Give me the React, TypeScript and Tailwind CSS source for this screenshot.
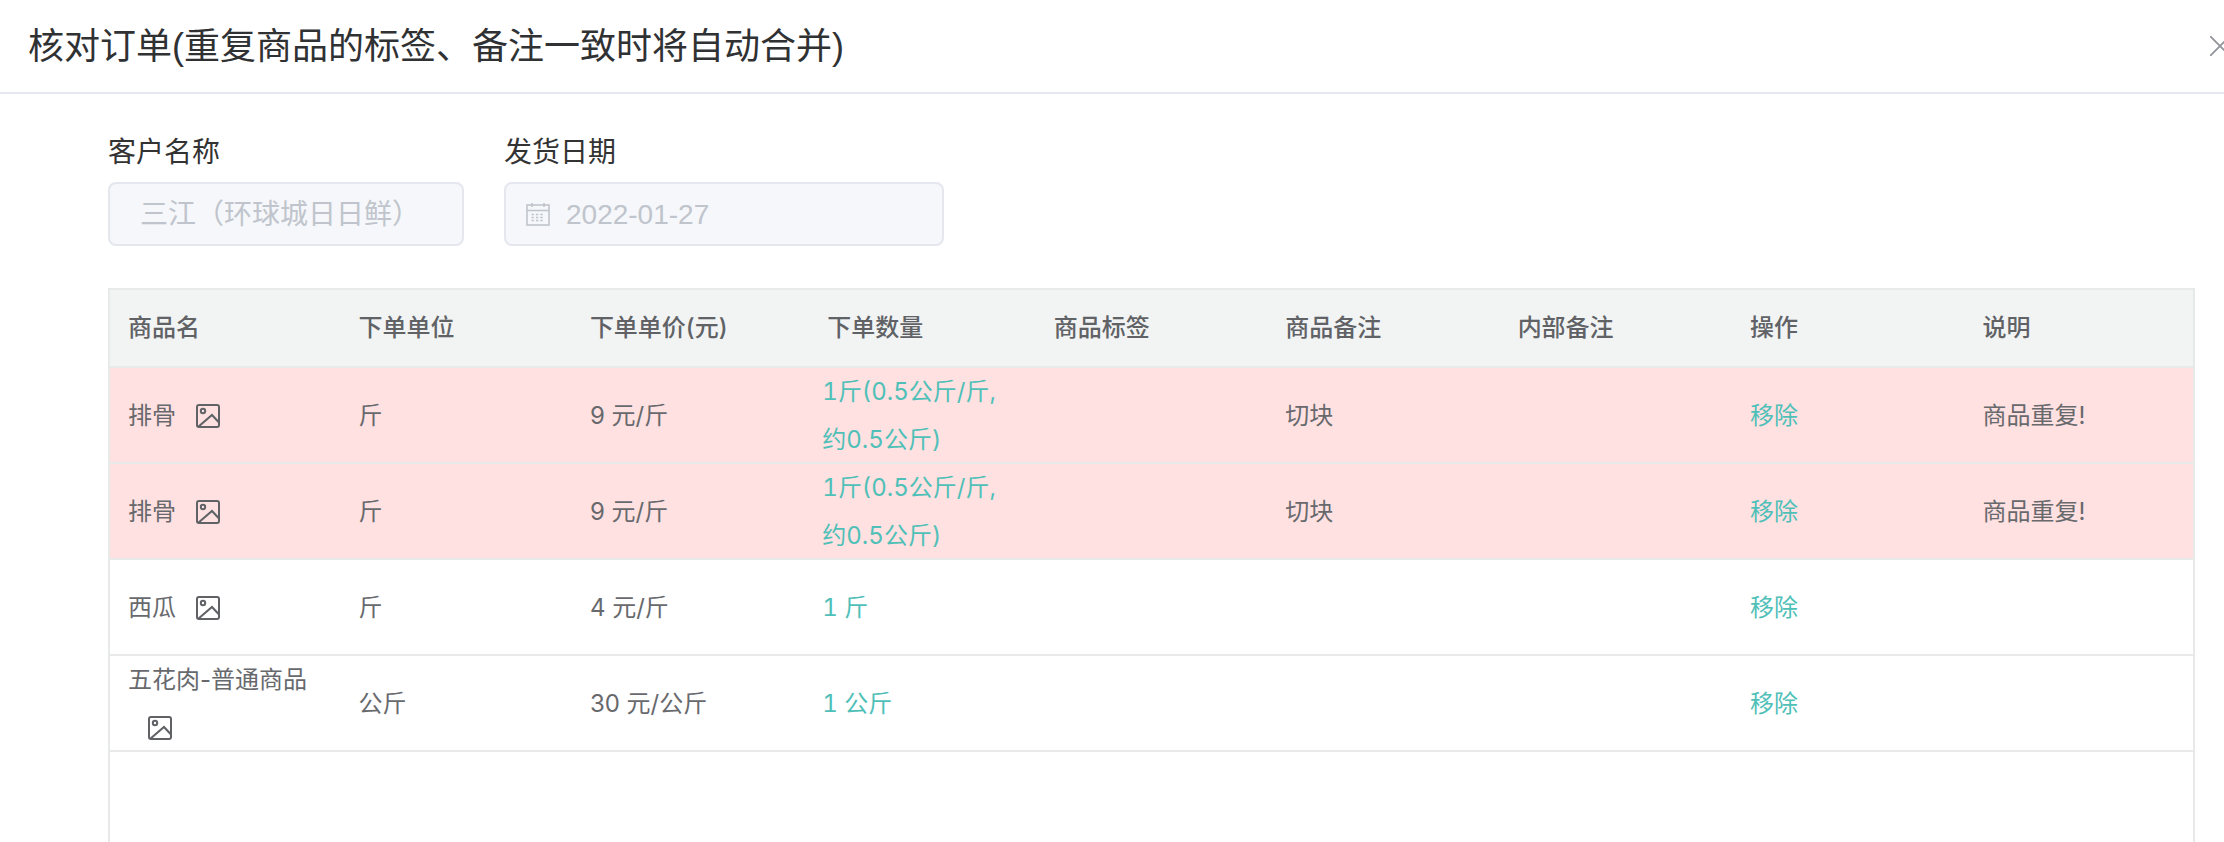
import React from "react";

const cjk = '"Liberation Sans","Noto Sans CJK SC",sans-serif';

function ImageIcon({ className = "" }: { className?: string }) {
  return (
    <svg viewBox="0 0 24 24" fill="none" stroke="#606266" strokeWidth="2" className={"inline-block w-6 h-6 align-[-4px] " + className}>
      <rect x="1" y="1" width="22" height="22" rx="2" />
      <circle cx="7" cy="7" r="2.2" />
      <path d="M2 23 L16 11 L23 18.5" />
    </svg>
  );
}

function CalendarIcon() {
  return (
    <svg viewBox="0 0 24 24" fill="none" stroke="#c0c4cc" strokeWidth="1.6" className="w-6 h-6 shrink-0">
      <rect x="1" y="3" width="22" height="20" />
      <path d="M1 8.5 H23 M6 1 V5 M18 1 V5" />
      <path d="M5.5 12.5 H18.5 M5.5 15.5 H18.5 M5.5 18.5 H18.5" strokeDasharray="2.4 2" />
    </svg>
  );
}

type Row = {
  name: string;
  unit: string;
  price: string;
  qty: React.ReactNode;
  note?: string;
  desc?: string;
  pink?: boolean;
};

const dupQty = (
  <>
    1斤(0.5公斤/斤,
    <br />
    约0.5公斤)
  </>
);

const rows: Row[] = [
  { name: "排骨", unit: "斤", price: "9 元/斤", qty: dupQty, note: "切块", desc: "商品重复!", pink: true },
  { name: "排骨", unit: "斤", price: "9 元/斤", qty: dupQty, note: "切块", desc: "商品重复!", pink: true },
  { name: "西瓜", unit: "斤", price: "4 元/斤", qty: "1 斤" },
  { name: "五花肉-普通商品", unit: "公斤", price: "30 元/公斤", qty: "1 公斤" },
];

const heads = ["商品名", "下单单位", "下单单价(元)", "下单数量", "商品标签", "商品备注", "内部备注", "操作", "说明"];
const headPads = ["pl-[18px]", "pl-[17px]", "pl-[17px]", "pl-[23px]", "pl-[18px]", "pl-[18px]", "pl-[19px]", "pl-[20px]", "pl-[21px]"];

export default function App() {
  return (
    <div className="h-[842px] w-[2224px] overflow-hidden bg-white flex flex-col" style={{ fontFamily: cjk }}>
      <div className="h-[94px] shrink-0 border-b-2 border-[#e4e7ed] flex items-center justify-between pl-[28px]">
        <h1 className="mt-[2px] text-[36px] leading-[48px] font-normal text-[#303133]">核对订单(重复商品的标签、备注一致时将自动合并)</h1>
        <svg viewBox="0 0 20 20" stroke="#909399" strokeWidth="1.8" className="w-5 h-5 shrink-0 -mr-[6px]">
          <path d="M0 0 L20 20 M20 0 L0 20" />
        </svg>
      </div>

      <div className="flex gap-10 pl-[108px] pt-[31px] shrink-0">
        <div className="w-[356px]">
          <div className="text-[28px] leading-[56px] text-[#333333]">客户名称</div>
          <div className="mt-[1px] h-[64px] rounded-lg border-2 border-[#e4e7ed] bg-[#f5f7fa] pl-[30px] pt-[2px] flex items-center text-[28px] text-[#c0c4cc]">
            三江（环球城日日鲜）
          </div>
        </div>
        <div className="w-[440px]">
          <div className="text-[28px] leading-[56px] text-[#333333]">发货日期</div>
          <div className="mt-[1px] h-[64px] rounded-lg border-2 border-[#e4e7ed] bg-[#f5f7fa] pl-[20px] flex items-center gap-[16px] text-[28px] text-[#c0c4cc]">
            <CalendarIcon />
            <span className="pt-[2px]">2022-01-27</span>
          </div>
        </div>
      </div>

      <div
        className="ml-[108px] mt-[42px] w-[2087px] flex-1 border-2 border-b-0 border-[#e8e9e9] text-[24px] text-[#67696d]"
        style={{ fontFamily: 'Inter,"Noto Sans CJK SC",sans-serif' }}
      >
        <table className="w-full table-fixed border-collapse">
          <thead>
            <tr className="h-[77px] bg-[#f2f4f4] border-b-2 border-[#e8e9e9]">
              {heads.map((h, i) => (
                <th key={h} className={"text-left font-medium text-[#606266] " + headPads[i]}>
                  {h}
                </th>
              ))}
            </tr>
          </thead>
          <tbody>
            {rows.map((r, i) => (
              <tr key={i} className={"h-[96px] border-b-2 border-[#e8e9e9] " + (r.pink ? "bg-[#ffe1e1]" : "bg-white")}>
                <td className="pl-[18px] pr-[18px]">
                  <div className="-mb-[2px] leading-[48px]">
                    {r.name}
                    <ImageIcon className="ml-[20px]" />
                  </div>
                </td>
                <td className="pl-[17px] pt-[2px]">{r.unit}</td>
                <td className="pl-[17px] pt-[2px]">{r.price}</td>
                <td className="pl-[18px] text-[#4fc0b8] tabular-nums">
                  <div className="-mb-[2px] leading-[48px]">{r.qty}</div>
                </td>
                <td className="pl-[18px]" />
                <td className="pl-[18px] pt-[2px]">{r.note}</td>
                <td className="pl-[19px]" />
                <td className="pl-[20px] pt-[2px] text-[#4fc0b8]">移除</td>
                <td className="pl-[21px] pt-[2px]">{r.desc}</td>
              </tr>
            ))}
          </tbody>
        </table>
      </div>
    </div>
  );
}
